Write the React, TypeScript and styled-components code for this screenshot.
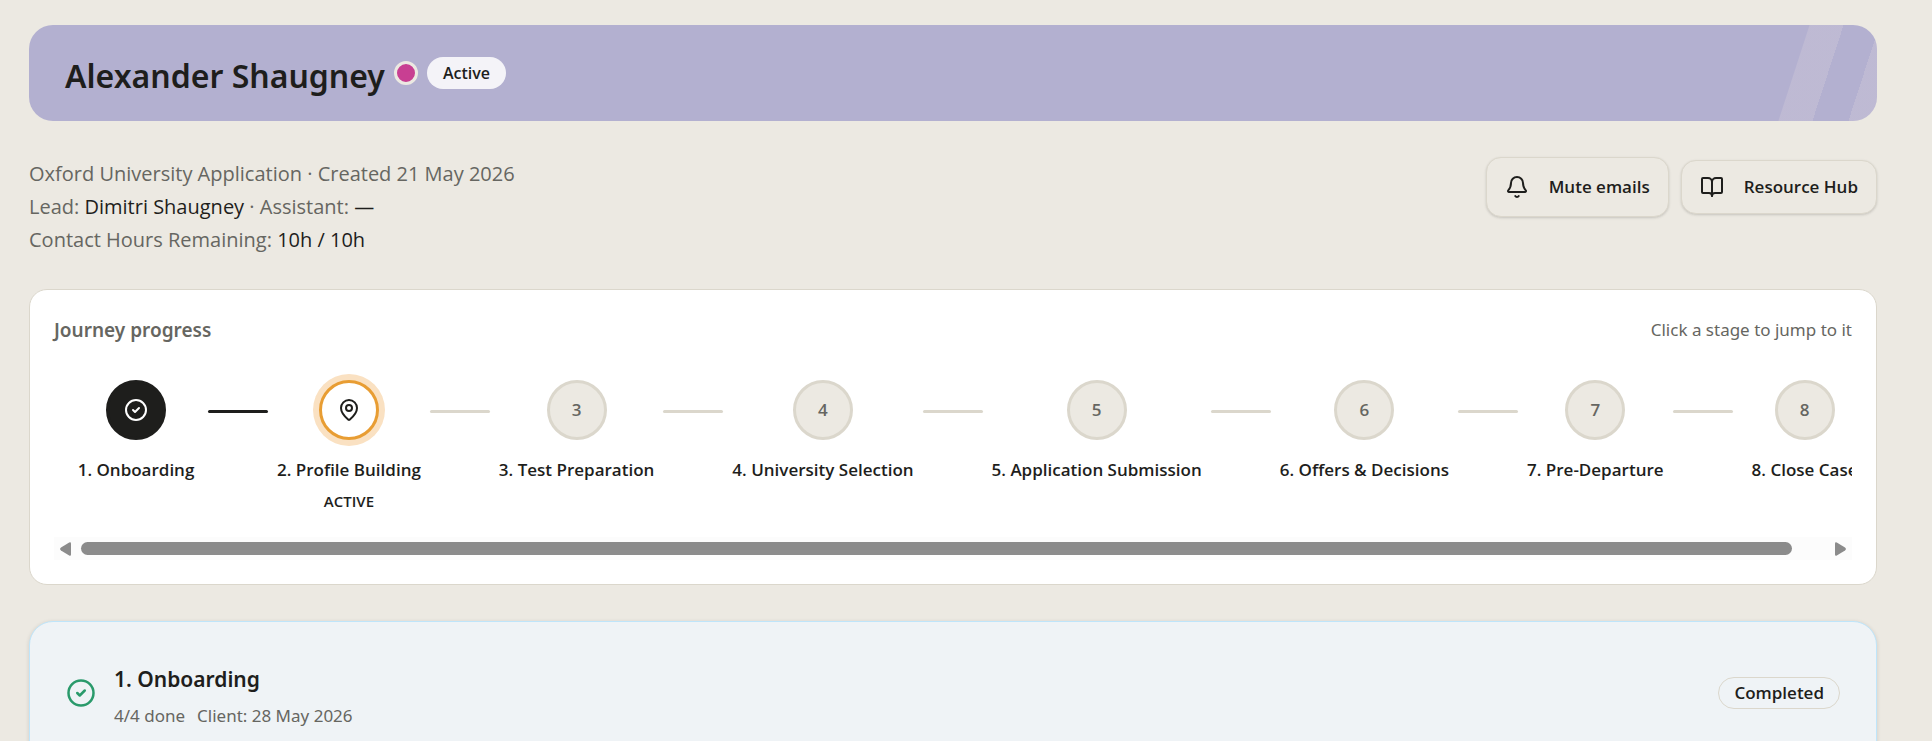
import React, { useEffect, useRef, useState } from "react";
import styled, { createGlobalStyle } from "styled-components";
import { Bell, BookOpen, CircleCheck, MapPin } from "lucide-react";

const ink = "#1e1e1c";
const muted = "#666661";
const sand = "#ece9e2";
const line = "#dbd7cc";
const displayFont = `"Noto Sans", "Open Sans", sans-serif`;

const GlobalStyle = createGlobalStyle`
  * { box-sizing: border-box; }
  body {
    margin: 0;
    background: ${sand};
    color: ${ink};
    font-family: "Open Sans", "Noto Sans", sans-serif;
    font-size: 17px;
    line-height: 24px;
  }
  h1, h2, p { margin: 0; }
  h1, h2 { font-family: ${displayFont}; font-weight: 600; }
  button { font: inherit; color: inherit; cursor: pointer; }
`;

const Page = styled.main`
  padding: 25px 55px 36px 29px;
`;

const Banner = styled.header`
  position: relative;
  display: flex;
  align-items: center;
  gap: 9px;
  height: 96px;
  padding: 0 36px;
  border-radius: 24px;
  overflow: hidden;
  background: #b3b0d0;

  &::after {
    content: "";
    position: absolute;
    top: 0;
    bottom: 0;
    right: -21px;
    width: 104px;
    transform: skewX(-18deg);
    background: linear-gradient(
      90deg,
      rgba(236, 225, 225, 0.2) 34px,
      transparent 34px 70px,
      rgba(236, 225, 225, 0.2) 70px
    );
  }
`;

const ClientName = styled.h1`
  padding-top: 5px;
  font-size: 32px;
  line-height: 48px;
`;

const StatusDot = styled.span`
  width: 24px;
  height: 24px;
  border: 3px solid ${sand};
  border-radius: 50%;
  background: #c83f92;
`;

const Pill = styled.span<{ $outlined?: boolean }>`
  height: 32px;
  padding: 0 15px;
  border: 1px solid ${(p) => (p.$outlined ? line : "transparent")};
  border-radius: 16px;
  background: ${(p) => (p.$outlined ? "transparent" : "#f4f3f8")};
  font-weight: 600;
  line-height: 30px;
`;

const BannerPill = styled(Pill)`
  font-size: 16px;
`;

const Summary = styled.div`
  display: flex;
  justify-content: space-between;
  align-items: flex-start;
  margin: 36px 0 33px;
`;

const Details = styled.div`
  color: ${muted};
  font-size: 20px;
  line-height: 33px;

  strong { color: ${ink}; font-weight: 400; }
`;

const Actions = styled.div`
  display: flex;
  align-items: center;
  gap: 12px;
`;

const ActionButton = styled.button<{ $tall?: boolean }>`
  display: flex;
  align-items: center;
  gap: 20px;
  height: ${(p) => (p.$tall ? 60 : 54)}px;
  padding: 0 18px;
  border: 1px solid ${line};
  border-radius: 15px;
  background: ${sand};
  box-shadow: 0 1px 3px rgba(30, 30, 28, 0.12), 0 1px 2px rgba(30, 30, 28, 0.06);
  font-weight: 600;
`;

const JourneyCard = styled.section`
  padding: 24px;
  margin-bottom: 36px;
  border: 1px solid ${line};
  border-radius: 18px;
  background: #fff;
`;

const JourneyHeader = styled.div`
  display: flex;
  justify-content: space-between;
  align-items: center;
  color: ${muted};
`;

const JourneyTitle = styled.h2`
  font-size: 19px;
  line-height: 32px;
`;

const JourneyHint = styled.p`
  font-family: ${displayFont};
`;

const StageScroller = styled.div`
  overflow-x: auto;
  scrollbar-width: none;
  padding: 34px 0 24px;
`;

const StageList = styled.div`
  display: flex;
  align-items: flex-start;
  gap: 6px;
  width: max-content;
  padding: 0 16px;
`;

const StageButton = styled.button`
  display: flex;
  flex-direction: column;
  align-items: center;
  flex: none;
  min-width: 132px;
  padding: 0 3px;
  border: 0;
  background: none;
  font-weight: 600;
  white-space: nowrap;
`;

type StageState = "done" | "active" | "upcoming";

const circleFill = { done: ink, active: "#fff", upcoming: sand };
const circleBorder = { done: ink, active: "#e89d33", upcoming: line };
const circleInk = { done: "#fff", active: ink, upcoming: muted };

const StageCircle = styled.span<{ $state: StageState }>`
  display: flex;
  align-items: center;
  justify-content: center;
  width: 60px;
  height: 60px;
  margin-bottom: 18px;
  border: 3px solid ${(p) => circleBorder[p.$state]};
  border-radius: 50%;
  background: ${(p) => circleFill[p.$state]};
  color: ${(p) => circleInk[p.$state]};
  box-shadow: ${(p) => (p.$state === "active" ? "0 0 0 6px #fae1c2" : "none")};
`;

const StageNote = styled.span`
  margin-top: 7px;
  font-size: 15px;
`;

const Connector = styled.span<{ $done: boolean }>`
  flex: none;
  width: 60px;
  height: 3px;
  margin-top: 30px;
  border-radius: 2px;
  background: ${(p) => (p.$done ? ink : line)};
`;

const ScrollBar = styled.div`
  display: flex;
  align-items: center;
  gap: 10px;
  height: 23px;
  padding: 0 6px;
  background: #fcfcfc;
`;

const ScrollArrow = styled.button`
  display: flex;
  padding: 0;
  border: 0;
  background: none;
`;

const ScrollRail = styled.div`
  flex: 1;
`;

const ScrollThumb = styled.div`
  height: 13px;
  border-radius: 7px;
  background: #8b8b8b;
`;

const StageCard = styled.section`
  display: flex;
  align-items: center;
  gap: 18px;
  padding: 36px;
  border: 1px solid #bfe5fa;
  border-radius: 24px;
  background: #eff3f6;
  box-shadow: 0 1px 4px rgba(30, 30, 28, 0.14);
`;

const StageInfo = styled.div`
  flex: 1;
`;

const StageTitle = styled.h2`
  margin-bottom: 4px;
  font-size: 21px;
  line-height: 42px;
`;

const StageMeta = styled.p`
  display: flex;
  gap: 12px;
  color: ${muted};
  font-family: ${displayFont};
`;

const stages: { name: string; state: StageState }[] = [
  { name: "Onboarding", state: "done" },
  { name: "Profile Building", state: "active" },
  { name: "Test Preparation", state: "upcoming" },
  { name: "University Selection", state: "upcoming" },
  { name: "Application Submission", state: "upcoming" },
  { name: "Offers & Decisions", state: "upcoming" },
  { name: "Pre-Departure", state: "upcoming" },
  { name: "Close Case", state: "upcoming" },
];

function circleContent(state: StageState, number: number) {
  if (state === "done") return <CircleCheck size={24} />;
  if (state === "active") return <MapPin size={24} />;
  return number;
}

function Arrow({ flipped }: { flipped?: boolean }) {
  return (
    <svg width="11" height="14" viewBox="0 0 11 14" aria-hidden="true">
      <path
        d={flipped
          ? "M0 1.5Q0 -.4 1.8 .4L10 5.6Q11.8 7 10 8.4L1.8 13.6Q0 14.4 0 12.5Z"
          : "M11 1.5Q11 -.4 9.2 .4L1 5.6Q-.8 7 1 8.4L9.2 13.6Q11 14.4 11 12.5Z"}
        fill="#8b8b8b"
      />
    </svg>
  );
}

export default function App() {
  const scroller = useRef<HTMLDivElement>(null);
  const [thumb, setThumb] = useState({ width: 100, left: 0 });

  const measure = () => {
    const el = scroller.current;
    if (!el) return;
    setThumb({
      width: (el.clientWidth / el.scrollWidth) * 100,
      left: (el.scrollLeft / el.scrollWidth) * 100,
    });
  };

  useEffect(() => {
    measure();
    window.addEventListener("resize", measure);
    return () => window.removeEventListener("resize", measure);
  }, []);

  const scrollBy = (left: number) =>
    scroller.current?.scrollBy({ left, behavior: "smooth" });

  return (
    <>
      <GlobalStyle />
      <Page>
        <Banner>
          <ClientName>Alexander Shaugney</ClientName>
          <StatusDot />
          <BannerPill>Active</BannerPill>
        </Banner>

        <Summary>
          <Details>
            <p>Oxford University Application · Created 21 May 2026</p>
            <p>Lead: <strong>Dimitri Shaugney</strong> · Assistant: <strong>—</strong></p>
            <p>Contact Hours Remaining: <strong>10h / 10h</strong></p>
          </Details>
          <Actions>
            <ActionButton type="button" $tall>
              <Bell size={24} />
              Mute emails
            </ActionButton>
            <ActionButton type="button">
              <BookOpen size={24} />
              Resource Hub
            </ActionButton>
          </Actions>
        </Summary>

        <JourneyCard>
          <JourneyHeader>
            <JourneyTitle>Journey progress</JourneyTitle>
            <JourneyHint>Click a stage to jump to it</JourneyHint>
          </JourneyHeader>
          <StageScroller ref={scroller} onScroll={measure}>
            <StageList>
              {stages.map((stage, i) => (
                <React.Fragment key={stage.name}>
                  {i > 0 && <Connector $done={stages[i - 1].state === "done"} />}
                  <StageButton type="button">
                    <StageCircle $state={stage.state}>
                      {circleContent(stage.state, i + 1)}
                    </StageCircle>
                    <span>{i + 1}. {stage.name}</span>
                    {stage.state === "active" && <StageNote>ACTIVE</StageNote>}
                  </StageButton>
                </React.Fragment>
              ))}
            </StageList>
          </StageScroller>
          <ScrollBar>
            <ScrollArrow type="button" aria-label="Scroll left" onClick={() => scrollBy(-120)}>
              <Arrow />
            </ScrollArrow>
            <ScrollRail>
              <ScrollThumb style={{ width: `${thumb.width}%`, marginLeft: `${thumb.left}%` }} />
            </ScrollRail>
            <ScrollArrow type="button" aria-label="Scroll right" onClick={() => scrollBy(120)}>
              <Arrow flipped />
            </ScrollArrow>
          </ScrollBar>
        </JourneyCard>

        <StageCard>
          <CircleCheck size={30} color="#2a9a6b" />
          <StageInfo>
            <StageTitle>1. Onboarding</StageTitle>
            <StageMeta>
              <span>4/4 done</span>
              <span>Client: 28 May 2026</span>
            </StageMeta>
          </StageInfo>
          <Pill $outlined>Completed</Pill>
        </StageCard>
      </Page>
    </>
  );
}
